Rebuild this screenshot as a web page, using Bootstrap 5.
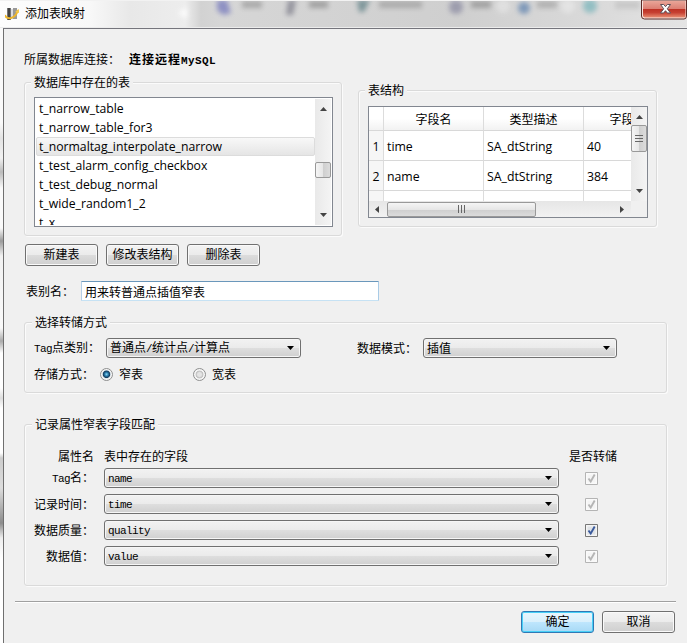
<!DOCTYPE html>
<html lang="zh-CN">
<head>
<meta charset="utf-8">
<meta name="viewport" content="width=device-width, initial-scale=1">
<title>添加表映射</title>
<link href="https://cdn.jsdelivr.net/npm/bootstrap@5.3.0/dist/css/bootstrap.min.css" rel="stylesheet">
<style>
body{width:687px;height:643px;overflow:hidden;background:#f7f7f7;color:#000;font:12px/14px "Noto Sans CJK SC",sans-serif}
.en{font-family:"Liberation Mono",monospace;font-size:11px;letter-spacing:-.6px}
.ui{font-family:"Open Sans","Noto Sans CJK SC",sans-serif;font-size:12px}
/* window frame */
.titlebar{height:28px;position:relative;overflow:hidden;background:linear-gradient(90deg,#fdfdfd 0,#f8f8f8 90px,#e8e8e8 130px,#ededed 185px,#d2d2d2 201px,#d6d6d6 220px,#cfcfcf 460px,#dadada 600px,#e4e4e4)}
.titlebar .glass{position:absolute;left:0;top:0}
.titlebar .caption{position:relative;padding-left:5px;height:28px;gap:5px}
.close-btn{position:absolute;right:0;top:0}
.frame{height:615px}
.edge{width:3px;background:linear-gradient(#fafafa 0 95px,#e3e3e3 110px,#f2f2f2 130px,#bbb 144px,#fafafa 160px 200px,#9a9a9a 213px,#f2f2f2 228px,#fafafa 300px,#aaa 313px,#fff 325px 360px,#ddd 370px,#fff 380px 425px,#ccc 430px,#ddd 460px,#8c8c8c 495px,#eee 510px,#fff 530px)}
.client{background:#f0f0f0;border-left:1px solid #6f6f6f;border-top:1px solid #75757c}
.conn{margin-top:21px;height:18px;padding-left:20px;line-height:18px;gap:9px}
.conn strong{letter-spacing:1px}
.conn strong .en{letter-spacing:.4px}
.groups{height:176px;padding-left:20px;gap:16px}
/* group box */
.gbox{border:1px solid #dadada;border-radius:3px;box-shadow:inset 1px 1px 0 #fbfbfb,1px 1px 0 #fbfbfb}
.gbox>.cap{width:max-content;height:14px;margin-top:-8px;margin-left:7px;padding:0 3px;background:#f0f0f0}
.g-list{width:318px;height:154px;margin-top:14px}
.g-list>.cap,.g-struct>.cap{margin-left:6px}
.g-struct{width:299px;height:137px;margin-top:22px}
.g-mode{width:643px;height:71px;margin:21px 0 0 20px}
.g-match{width:643px;height:162px;margin:31px 0 0 20px}
/* list */
.listbox{width:299px;height:130px;margin:8px 0 0 9px;border:1px solid #828790;background:#fff;padding:1px}
.items{width:279px;overflow:hidden;height:126px}
.items div{height:19px;line-height:17px;padding-left:2px;border:1px solid transparent;white-space:nowrap;font-size:12.23px}
.items .sel{border-color:#dcdcdc;border-radius:2px;background:linear-gradient(#f8f8f8,#e5e5e5)}
.vbar{width:16px;background:linear-gradient(90deg,#e9e9e9,#f4f4f4)}
.thumb{border:1px solid #999;border-radius:2px;background:linear-gradient(90deg,#f5f5f5,#e6e6e6 50%,#cfcfcf 52%,#dcdcdc)}
svg{display:block}
/* structure table */
.gridbox{width:280px;height:112px;margin:9px 0 0 9px;border:1px solid #828790;background:#fff}
.view{width:262px;height:94px;overflow:hidden}
.sgrid{display:grid;grid-template-columns:15px 100px 100px 100px;grid-template-rows:24px 30px 30px 30px}
.sgrid>div{border-right:1px solid #dcdcdc;border-bottom:1px solid #d8d8d8;padding:3px 0 0 3px;display:flex;align-items:center;font-size:12.3px}
.sgrid>.hd{justify-content:center;padding:3px 0 0;background:linear-gradient(#fff 50%,#f2f2f2);font-size:12px}
.sgrid>.rh{justify-content:center;padding:3px 0 0;background:#f6f6f6}
.hbar{width:262px;height:16px;background:linear-gradient(#e6e6e6,#f2f2f2)}
.corner{width:16px;height:16px;background:#f0f0f0}
.hbar .thumb{width:149px;height:15px;background:linear-gradient(#f5f5f5,#e6e6e6 50%,#cfcfcf 52%,#dcdcdc)}
/* buttons and fields */
.wbtn{width:73px;height:22px;padding:0 0 2px;font-size:12px;line-height:18px;color:#000;border:1px solid #707070;border-radius:3px;background:linear-gradient(#f3f3f3,#ebebeb 50%,#dcdcdc 51%,#cfcfcf);box-shadow:inset 0 0 0 1px #fafafa}
.wbtn.dflt{border-color:#3079b5;background:linear-gradient(#e9f6fd,#d9f0fc 50%,#bee6fd 51%,#a7d9f5);box-shadow:inset 0 0 0 1px #48d0f7}
.alias{width:298px;height:20px;padding:0 3px;font-size:12px;line-height:18px;color:#000;background:#fff;border:1px solid;border-color:#6a97bb #a9cbe6 #c6e2f4 #b5cfe7;border-radius:1px}
.combo{height:20px;padding:0 6px 0 3px;border:1px solid #707070;border-radius:3px;background:linear-gradient(#f2f2f2,#ebebeb 48%,#dedede 50%,#d0d0d0);box-shadow:inset 0 0 0 1px #f6f6f6;line-height:18px}
.combo>.en{padding-top:2px}
.radio-dot{width:13px;height:13px;border:1px solid #8e8f8f;border-radius:50%;background:radial-gradient(#e4e4e4 25%,#bcbcbc 45%,#f5f5f5 55%)}
.radio-dot.on{background:radial-gradient(circle at 50% 48%,#8fd7f5 0,#2a7fae 22%,#123a5c 42%,#d8e0e6 52%,#f5f5f5 60%)}
.frow{height:26px}
.flabel{width:69px;text-align:right}
.rule{margin:15px 11px 0;height:2px;border-top:1px solid #a0a0a0;background:#fff}
</style>
</head>
<body>
<header class="titlebar">
  <svg class="glass" width="687" height="28"><defs><filter id="soft" x="-50%" y="-50%" width="200%" height="200%"><feGaussianBlur stdDeviation="2.6"/></filter></defs>
    <g filter="url(#soft)" opacity=".85">
      <path d="M178 13l9-6v12z" fill="#fff"/>
      <path d="M217 0h10l4 13-8 2-6-5z" fill="#8285c0"/><rect x="242" y="1" width="20" height="7" fill="#a2a2a2"/>
      <path d="M288 0h8l-3 15h-7z" fill="#898994"/><rect x="309" y="1" width="19" height="7" fill="#999"/>
      <path d="M357 0h13l-6 12h-5z" fill="#6f8c91"/><rect x="379" y="1" width="43" height="7" fill="#a5a5a5"/>
      <circle cx="456" cy="7" r="7" fill="#9494a8"/><rect x="471" y="1" width="20" height="7" fill="#999"/>
      <circle cx="503" cy="6" r="7" fill="#e2e2e2"/><circle cx="524" cy="8" r="6" fill="#718fb5"/><rect x="537" y="1" width="20" height="7" fill="#aaa"/>
      <circle cx="568" cy="6" r="7" fill="#e6e6e6"/><circle cx="590" cy="6" r="7" fill="#86babf"/><rect x="615" y="1" width="25" height="8" fill="#c5c5c5"/>
    </g>
    <path d="M0 .5h687" stroke="#f2f2f2"/><path d="M0 27.5h687" stroke="#ececec"/>
  </svg>
  <div class="caption d-flex align-items-center">
    <svg width="15" height="14" viewBox="0 0 15 14"><path d="M2 1h4v12H2z" fill="#777"/><path d="M3 1h2v12H3z" fill="#444"/><path d="M6 2h2v10H6z" fill="#ddd"/><path d="M8 1h4v11H8z" fill="#999"/><path d="M0 8c1 5 10 5 13-5" stroke="#edb62c" stroke-width="2" fill="none"/><path d="M10 5l4-3v4z" fill="#f5c94b"/></svg>
    <span class="ui">添加表映射</span>
  </div>
  <svg class="close-btn" width="46" height="20" viewBox="0 0 46 20"><defs><linearGradient id="red" x1="0" x2="0" y1="0" y2="1"><stop offset="0" stop-color="#e9a598"/><stop offset=".46" stop-color="#dc8074"/><stop offset=".48" stop-color="#bd3024"/><stop offset=".7" stop-color="#c64032"/><stop offset="1" stop-color="#e88b70"/></linearGradient></defs>
    <path d="M.5 0v16q0 3 3 3H43q2.500 0 2.500-3V0z" fill="#f8e4df" stroke="#5a2a26"/><path d="M2 1h42.500v15q0 1.500-1.500 1.500H4q-2 0-2-2z" fill="url(#red)"/>
    <path d="M19.500 4.500h3.200l1.800 2.200 1.800-2.200h3.200l-3.200 4.300 3.200 4.200h-3.200l-1.800-2.300-1.800 2.300h-3.200l3.200-4.200z" fill="#fff" stroke="#5c5058"/></svg>
</header>
<div class="frame d-flex">
  <div class="edge flex-shrink-0"></div>
  <main class="client flex-grow-1 d-flex flex-column">
    <div class="conn d-flex"><span>所属数据库连接：</span><strong>连接远程<span class="en">MySQL</span></strong></div>
    <div class="groups d-flex align-items-start">
      <section class="gbox g-list">
        <div class="cap">数据库中存在的表</div>
        <div class="listbox d-flex justify-content-between">
          <div class="items ui">
            <div>t_narrow_table</div><div>t_narrow_table_for3</div><div class="sel">t_normaltag_interpolate_narrow</div><div>t_test_alarm_config_checkbox</div><div>t_test_debug_normal</div><div>t_wide_random1_2</div><div>t_x</div>
          </div>
          <div class="vbar d-flex flex-column align-items-center">
            <svg width="7" height="4" class="mt-2"><path d="M0 4L3.500 0 7 4z" fill="#444"/></svg>
            <div class="thumb w-100" style="height:16px;margin-top:51px"></div>
            <svg width="7" height="4" class="mt-auto mb-2"><path d="M0 0h7L3.500 4z" fill="#444"/></svg>
          </div>
        </div>
      </section>
      <section class="gbox g-struct">
        <div class="cap">表结构</div>
        <div class="gridbox">
          <div class="d-flex">
            <div class="view"><div class="sgrid ui">
              <div class="hd"></div><div class="hd">字段名</div><div class="hd">类型描述</div><div class="hd">字段长度</div>
              <div class="rh">1</div><div>time</div><div>SA_dtString</div><div>40</div>
              <div class="rh">2</div><div>name</div><div>SA_dtString</div><div>384</div>
              <div class="rh"></div><div></div><div></div><div></div>
            </div></div>
            <div class="vbar d-flex flex-column align-items-center">
              <svg width="7" height="4" class="mt-2"><path d="M0 4L3.500 0 7 4z" fill="#444"/></svg>
              <div class="thumb w-100 d-flex align-items-center justify-content-center" style="height:27px;margin-top:6px"><svg width="8" height="8"><path d="M0 .5h8M0 3.500h8M0 6.500h8" stroke="#666"/></svg></div>
              <svg width="7" height="4" class="mt-auto mb-2"><path d="M0 0h7L3.500 4z" fill="#444"/></svg>
            </div>
          </div>
          <div class="d-flex">
            <div class="hbar d-flex align-items-center">
              <svg width="4" height="7" style="margin-left:6px"><path d="M4 0v7L0 3.500z" fill="#444"/></svg>
              <div class="thumb d-flex align-items-center justify-content-center" style="margin-left:8px"><svg width="8" height="8"><path d="M.5 0v8M3.500 0v8M6.500 0v8" stroke="#666"/></svg></div>
              <svg width="4" height="7" class="ms-auto" style="margin-right:7px"><path d="M0 0v7l4-3.500z" fill="#444"/></svg>
            </div>
            <div class="corner"></div>
          </div>
        </div>
      </section>
    </div>
    <div class="d-flex gap-2" style="padding-left:21px;height:37px">
      <div><button class="btn wbtn">新建表</button></div><div><button class="btn wbtn">修改表结构</button></div><div><button class="btn wbtn">删除表</button></div>
    </div>
    <div class="d-flex align-items-center" style="padding-left:22px;height:20px"><label style="width:55px" for="alias">表别名：</label><input id="alias" class="form-control alias" value="用来转普通点插值窄表"></div>
    <section class="gbox g-mode">
      <div class="cap">选择转储方式</div>
      <div class="d-flex align-items-center" style="padding-left:9px;margin-top:9px">
        <span style="width:72px"><span class="en">Tag</span>点类别：</span>
        <div class="combo d-flex align-items-center justify-content-between" style="width:195px"><span>普通点<span class="en">/</span>统计点<span class="en">/</span>计算点</span><svg width="7" height="4"><path d="M0 0h7L3.500 4z"/></svg></div>
        <span style="width:66px;margin-left:56px">数据模式：</span>
        <div class="combo d-flex align-items-center justify-content-between" style="width:194px"><span>插值</span><svg width="7" height="4"><path d="M0 0h7L3.500 4z"/></svg></div>
      </div>
      <div class="d-flex align-items-center" style="padding-left:9px;margin-top:9px">
        <span style="width:66px">存储方式：</span><i class="radio-dot on"></i><span style="width:74px;margin-left:6px">窄表</span><i class="radio-dot"></i><span style="margin-left:6px">宽表</span>
      </div>
    </section>
    <section class="gbox g-match">
      <div class="cap">记录属性窄表字段匹配</div>
      <div class="d-flex" style="margin-top:18px;height:16px"><span style="width:69px" class="text-end">属性名</span><span style="width:465px;margin-left:10px">表中存在的字段</span><span>是否转储</span></div>
      <div id="fields"></div>
    </section>
    <div class="rule"></div>
    <div class="d-flex justify-content-end" style="margin-top:8px;padding-right:12px;gap:8px"><button class="btn wbtn dflt">确定</button><button class="btn wbtn">取消</button></div>
  </main>
</div>
<script>
const rows=[["<span class='en'>Tag</span>名：","name",0],["记录时间：","time",0],["数据质量：","quality",1],["数据值：","value",0]];
document.getElementById("fields").innerHTML=rows.map(([label,value,on])=>`<div class="frow d-flex align-items-center">
<span class="flabel">${label}</span>
<div class="combo d-flex align-items-center justify-content-between" style="width:455px;margin-left:10px"><span class="en">${value}</span><svg width="7" height="4"><path d="M0 0h7L3.500 4z"/></svg></div>
<svg width="13" height="13" style="margin-left:26px"><path d="M.5.5h12v12H.5z" fill="${on?"#f4f4f4":"#fafafa"}" stroke="${on?"#777":"#b4b4b4"}"/><path d="M2.500 2.500h8v8h-8z" fill="${on?"#dfe2e6":"#f4f4f4"}"/><path d="M3.500 6.500l2.200 3 4-7" fill="none" stroke="${on?"#3a5a9c":"#b5b5b5"}" stroke-width="1.900"/></svg></div>`).join("");
</script>
<script src="https://cdn.jsdelivr.net/npm/bootstrap@5.3.0/dist/js/bootstrap.bundle.min.js"></script>
</body>
</html>
